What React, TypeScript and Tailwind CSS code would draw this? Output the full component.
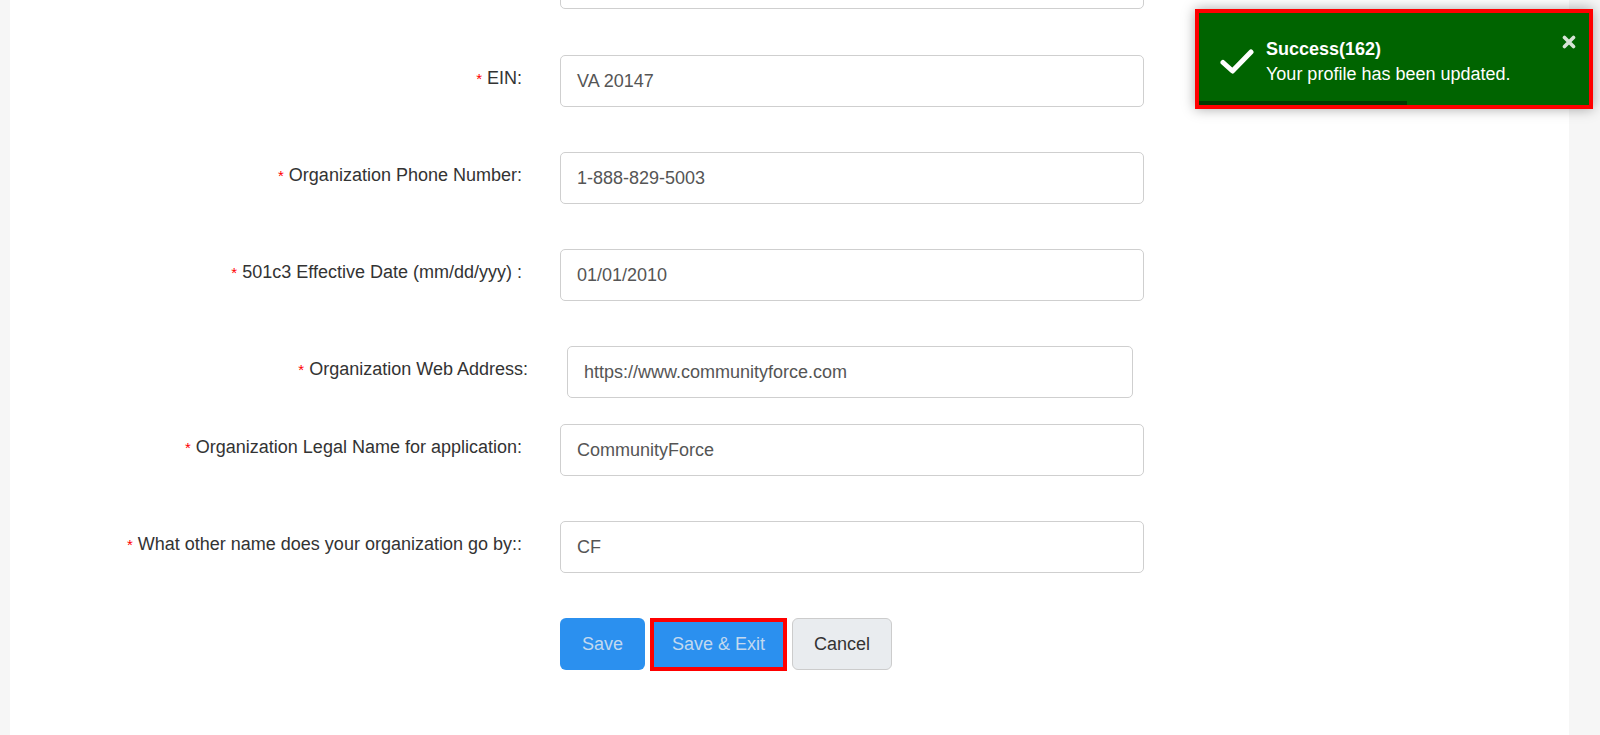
import React from 'react';

interface FieldRowProps {
    label: string;
    value: string;
    labelClass?: string;
    inputClass?: string;
    rowClass?: string;
}

function FieldRow({
    label,
    value,
    labelClass = 'w-[512px]',
    inputClass = 'ml-[38px] w-[584px]',
    rowClass = 'mb-[45px]'
}: FieldRowProps) {
    return (
        <div className={`flex items-start ${rowClass}`}>
            <label className={`shrink-0 text-right pt-[10px] leading-[26px] text-[18px] text-[#333] ${labelClass}`}>
                <span className="text-[#f00] text-[15px]">*</span> {label}
            </label>
            <div className={`h-[52px] border border-[#cfcfcf] rounded-[5px] px-4 flex items-center text-[18px] text-[#555] ${inputClass}`}>
                {value}
            </div>
        </div>
    );
}

function Toast() {
    return (
        <div className="fixed top-[9px] left-[1195px] w-[398px] h-[100px] border-4 border-[#ff0000] shadow-[0_0_12px_rgba(0,0,0,0.35)]">
            <div className="relative w-full h-full bg-[#006400] text-white">
                <div className="flex items-center pl-[21px] pt-[24px]">
                    <svg className="w-[34px] h-[26px] shrink-0" viewBox="0 0 34 26" fill="none">
                        <path d="M3 13.5 L12.5 22 L31 3" stroke="white" strokeWidth={5} strokeLinecap="round" strokeLinejoin="round" />
                    </svg>
                    <div className="ml-[12px] leading-[25px] text-[18px]">
                        <div className="font-bold">Success(162)</div>
                        <div>Your profile has been updated.</div>
                    </div>
                </div>
                <svg className="absolute top-[22px] right-[13px] w-[14px] h-[14px]" viewBox="0 0 14 14">
                    <path d="M2.5 2.5 L11.5 11.5 M11.5 2.5 L2.5 11.5" stroke="#d6e3d6" strokeWidth={3.6} strokeLinecap="round" />
                </svg>
                <div className="absolute left-0 bottom-0 w-[208px] h-[4px] bg-[#003b00]" />
            </div>
        </div>
    );
}

export default function App() {
    return (
        <div className="h-[735px] overflow-hidden bg-[#f6f6f6] flex" style={{ fontFamily: '"Liberation Sans", Arial, sans-serif' }}>
            <div className="ml-[10px] w-[1559px] h-full bg-white overflow-hidden">
                <div className="-mt-[43px]">
                    {/* field scrolled mostly out of view */}
                    <div className="ml-[550px] w-[584px] h-[52px] border border-[#cfcfcf] rounded-[5px] mb-[46px]" />

                    <FieldRow label="EIN:" value="VA 20147" />
                    <FieldRow label="Organization Phone Number:" value="1-888-829-5003" />
                    <FieldRow label="501c3 Effective Date (mm/dd/yyy) :" value="01/01/2010" />
                    <FieldRow
                        label="Organization Web Address:"
                        value="https://www.communityforce.com"
                        labelClass="w-[518px]"
                        inputClass="ml-[39px] w-[566px]"
                        rowClass="mb-[26px]"
                    />
                    <FieldRow label="Organization Legal Name for application:" value="CommunityForce" />
                    <FieldRow label="What other name does your organization go by::" value="CF" />

                    <div className="flex gap-[5px] ml-[550px]">
                        <button className="h-[52px] w-[85px] rounded-[6px] bg-[#2b90ef] text-[#c2d9ef] text-[18px]">
                            Save
                        </button>
                        <button className="h-[53px] w-[137px] border-4 border-[#ff0000] bg-[#2b90ef] text-[#c2d9ef] text-[18px]">
                            Save &amp; Exit
                        </button>
                        <button className="h-[52px] w-[100px] rounded-[6px] border border-[#cccccc] bg-[#e9ecef] text-[#333] text-[18px]">
                            Cancel
                        </button>
                    </div>
                </div>
            </div>
            <Toast />
        </div>
    );
}
